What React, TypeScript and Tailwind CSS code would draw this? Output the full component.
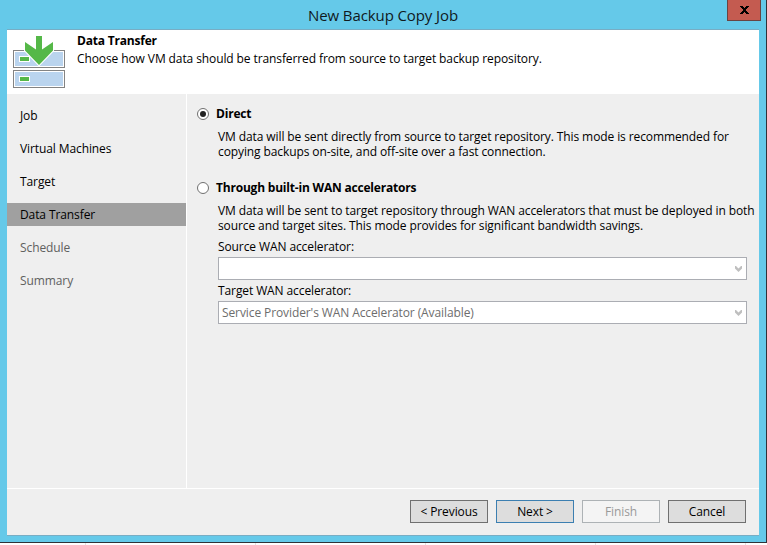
import type { ReactNode } from "react";

const steps = [
  { label: "Job", state: "done", cls: "tracking-[-0.1px]" },
  { label: "Virtual Machines", state: "done", cls: "tracking-[-0.1px]" },
  { label: "Target", state: "done", cls: "tracking-[-0.1px]" },
  { label: "Data Transfer", state: "current", cls: "tracking-[-0.1px]" },
  { label: "Schedule", state: "pending", cls: "tracking-[-0.1px]" },
  { label: "Summary", state: "pending", cls: "tracking-[-0.1px]" },
];

function TransferIcon() {
  return (
    <svg className="block h-[54px] w-[54px]" viewBox="0 0 54 54" shapeRendering="crispEdges">
      <rect x="1.5" y="15.5" width="51" height="17" fill="#fff" stroke="#838383" />
      <rect x="3" y="17" width="48" height="14" fill="#bad4ee" />
      <rect x="1.5" y="35.5" width="51" height="17" fill="#fff" stroke="#838383" />
      <rect x="3" y="37" width="48" height="14" fill="#bad4ee" />
      <rect x="7.5" y="21.5" width="10" height="5" fill="#55b848" stroke="#fff" />
      <rect x="7.5" y="41.5" width="10" height="5" fill="#55b848" stroke="#fff" />
      <path
        d="M24 1h6v13.500l11-7.500v8.500L27 30 13 15.500V7l11 7.500z"
        fill="#55b848"
        stroke="#fff"
        strokeWidth="2"
        paintOrder="stroke"
        shapeRendering="auto"
      />
    </svg>
  );
}

function Radio({ checked }: { checked?: boolean }) {
  return (
    <span className="flex h-3 w-3 items-center justify-center rounded-full border border-[#707070] bg-white">
      {checked && <span className="h-1.5 w-1.5 rounded-full bg-[#222]" />}
    </span>
  );
}

function Combo({ children }: { children?: ReactNode }) {
  return (
    <div className="flex h-[23px] w-[529px] items-center justify-between border border-[#abadb3] bg-white pl-[3px] pr-1 text-[#6d6d6d]">
      <span className="tracking-[-0.1px]">{children}</span>
      <svg className="h-1.5 w-[7px]" viewBox="0 0 7 6">
        <path d="M0 0h1l2.500 2.500L6 0h1v2.500L3.500 6 0 2.500z" fill="#bfbfbf" />
      </svg>
    </div>
  );
}

const buttons = [
  { label: "< Previous", cls: "border-[#707070] bg-[#ddd]" },
  { label: "Next >", cls: "border-[#3c7fb1] bg-[#ddd]" },
  { label: "Finish", cls: "border-[#adb2b5] bg-[#f4f4f4] text-[#9a9a9a]" },
  { label: "Cancel", cls: "border-[#707070] bg-[#ddd]" },
];

export default function App() {
  return (
    <div className="h-[545px] w-[767px] overflow-hidden bg-white font-['Open_Sans','Noto_Sans',sans-serif] text-[12px] leading-[15px] text-black">
      <div className="flex h-[543px] flex-col border-b border-r border-[#303238] bg-[#65c9e9] px-[7px] pb-1.5">
        <header className="relative flex h-[29px] shrink-0 justify-center">
          <h1 className="mt-[5px] text-[15px] leading-5 tracking-[-0.1px] text-[#10191d]">New Backup Copy Job</h1>
          <button className="absolute -right-[2px] top-0 flex h-[21px] w-[34px] items-center justify-center border border-t-0 border-[#694442] bg-[#c45b50]">
            <svg className="h-2 w-[9px]" viewBox="0 0 9 8" shapeRendering="crispEdges">
              <path d="M0 0h3v1h1v1h1V1h1V0h3v1H8v1H7v1H6v2h1v1h1v1h1v1H6V7H5V6H4v1H3v1H0V7h1V6h1V5h1V3H2V2H1V1H0z" />
            </svg>
          </button>
        </header>
        <main className="flex min-h-0 flex-1 flex-col border-y border-[#78adc4] bg-[#efefef]">
          <section className="flex h-16 shrink-0 bg-white pl-[5px] pt-[5px]">
            <TransferIcon />
            <div className="ml-[11px] -mt-[2px] whitespace-nowrap">
              <h2 className="h-[18px] font-bold tracking-[-0.2px]">Data Transfer</h2>
              <p className="tracking-[-0.1px]">Choose how VM data should be transferred from source to target backup repository.</p>
            </div>
          </section>
          <div className="flex h-[394px] shrink-0">
            <nav className="flex w-[180px] shrink-0 flex-col gap-2.5 border-r border-white pt-2.5">
              {steps.map((s) => (
                <div
                  key={s.label}
                  className={`flex h-[23px] items-center pl-[13px] ${s.cls} ${s.state === "current" ? "bg-[#a0a0a0]" : s.state === "pending" ? "text-[#606060]" : ""}`}
                >
                  {s.label}
                </div>
              ))}
            </nav>
            <section className="whitespace-nowrap pl-2.5 pt-3">
              <label className="flex h-[15px] items-center gap-[7px] font-bold">
                <Radio checked />
                <span className="tracking-[-0.2px]">Direct</span>
              </label>
              <div className="ml-[21px] mt-2">
                <p className="tracking-[-0.1px]">VM data will be sent directly from source to target repository. This mode is recommended for</p>
                <p className="tracking-[-0.1px]">copying backups on-site, and off-site over a fast connection.</p>
              </div>
              <label className="mt-[21px] flex h-[15px] items-center gap-[7px] font-bold">
                <Radio />
                <span className="tracking-[-0.2px]">Through built-in WAN accelerators</span>
              </label>
              <div className="ml-[21px] mt-2">
                <p className="tracking-[-0.1px]">VM data will be sent to target repository through WAN accelerators that must be deployed in both</p>
                <p className="tracking-[-0.1px]">source and target sites. This mode provides for significant bandwidth savings.</p>
                <p className="mb-[3px] mt-1.5 tracking-[-0.1px]">Source WAN accelerator:</p>
                <Combo />
                <p className="my-[3px] tracking-[-0.1px]">Target WAN accelerator:</p>
                <Combo>Service Provider's WAN Accelerator (Available)</Combo>
              </div>
            </section>
          </div>
          <footer className="flex flex-1 justify-end gap-2 border-t border-white pr-[13px] pt-[11px]">
            {buttons.map((b) => (
              <button key={b.label} className={`flex h-[23px] w-[78px] items-center justify-center border tracking-[-0.1px] ${b.cls}`}>
                {b.label}
              </button>
            ))}
          </footer>
        </main>
      </div>
      <div className="flex h-0.5 pl-[85px]">
        <span className="w-[170px] border-l border-[#e2e2e2]" />
        <span className="w-[170px] border-l border-[#e2e2e2]" />
        <span className="w-[170px] border-l border-[#e2e2e2]" />
        <span className="w-[150px] border-l border-[#e2e2e2]" />
        <span className="border-l border-[#e2e2e2]" />
      </div>
    </div>
  );
}
